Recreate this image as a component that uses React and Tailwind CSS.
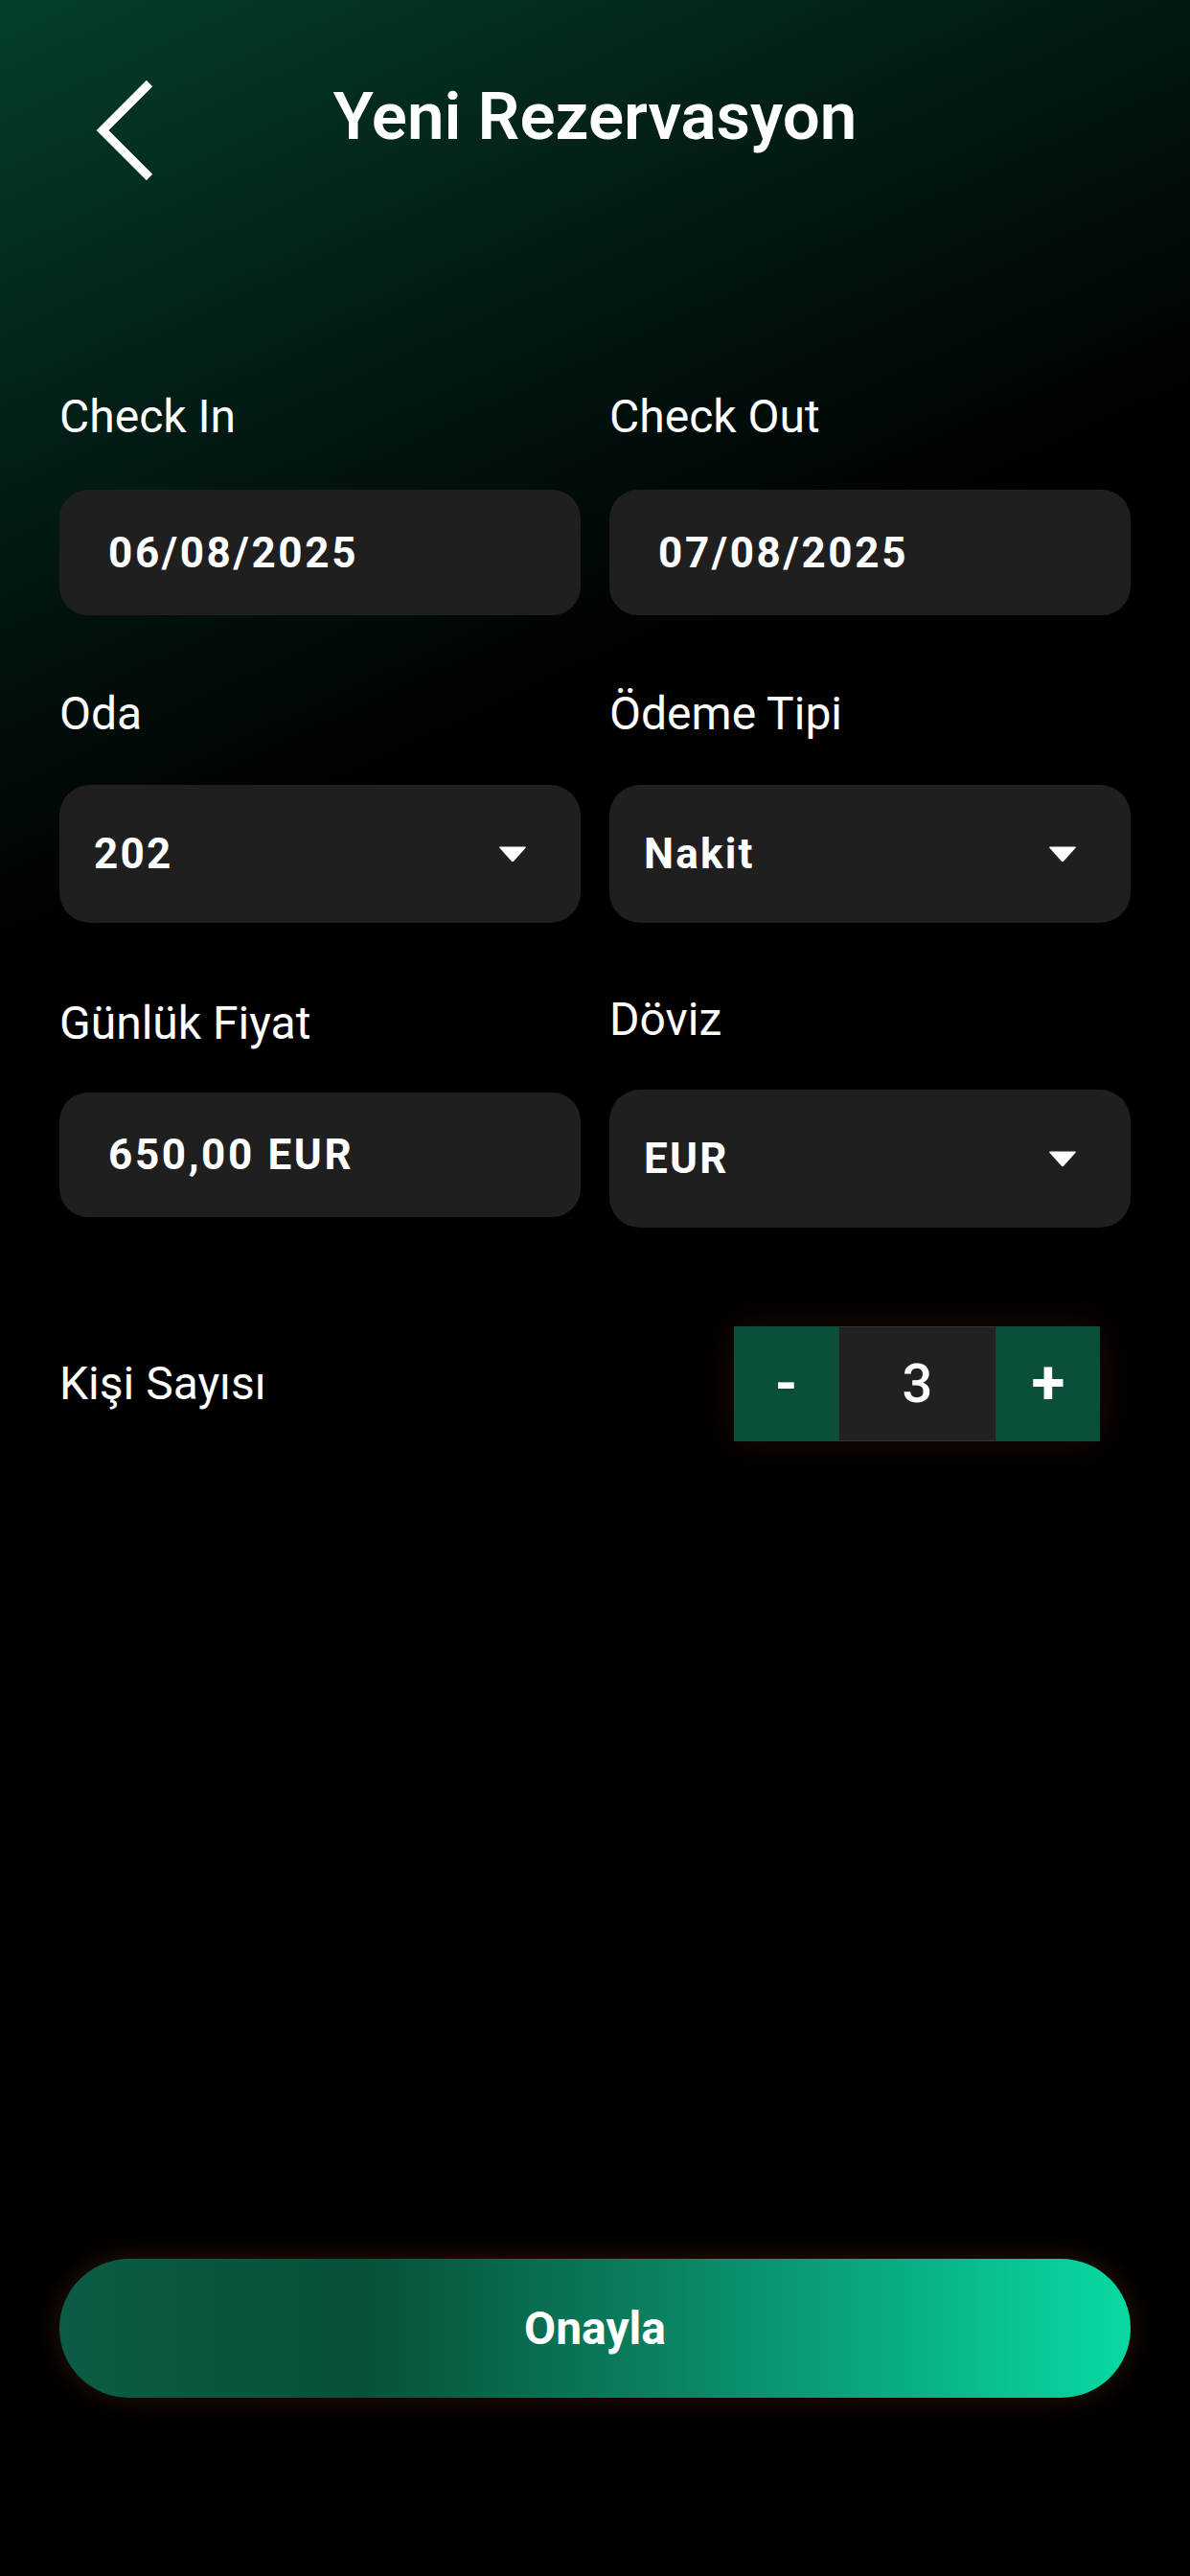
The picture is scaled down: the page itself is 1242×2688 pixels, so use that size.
import React from "react";

const font = { fontFamily: "Roboto, 'Noto Sans', 'Liberation Sans', sans-serif" };

function Caret() {
  return (
    <svg width="30" height="18" viewBox="0 0 30 18" className="shrink-0">
      <path d="M2 1.5 H28 Q29.5 1.5 28.6 2.8 L16.3 16.6 Q15 18 13.7 16.6 L1.4 2.8 Q0.5 1.5 2 1.5 Z" fill="#ffffff" />
    </svg>
  );
}

function Label({ children }) {
  return <div className="text-[48px] leading-[56px] font-normal text-white">{children}</div>;
}

function InputBox({ value, h = "h-[131px]", mt = "mt-[48px]" }) {
  return (
    <div className={`${mt} ${h} rounded-[30px] bg-[#1f1f1f] flex items-center pl-[51px]`}>
      <span className="text-[44px] font-bold tracking-[0.06em] text-white">{value}</span>
    </div>
  );
}

function SelectBox({ value, h = "h-[144px]", mt = "mt-[46px]" }) {
  return (
    <div className={`${mt} ${h} rounded-[32px] bg-[#1f1f1f] flex items-center justify-between pl-[36px] pr-[56px]`}>
      <span className="text-[44px] font-bold tracking-[0.05em] text-white">{value}</span>
      <Caret />
    </div>
  );
}

export default function App() {
  return (
    <div
      style={font}
      className="w-[1242px] h-[2688px] flex flex-col text-white bg-[linear-gradient(155deg,#043f2c_0%,#03291d_10%,#021611_19%,#000000_31%)]"
    >
      {/* Header */}
      <div className="h-[210px] grid grid-cols-[1fr_auto_1fr] items-start pt-[80px]">
        <div className="pl-[100px] pt-[4px]">
          <svg width="62" height="104" viewBox="0 0 62 104">
            <path d="M56 3 L7 52 L56 101" fill="none" stroke="#ffffff" strokeWidth="9" strokeLinejoin="miter" />
          </svg>
        </div>
        <h1 className="text-[69px] leading-[84px] font-semibold text-white">Yeni Rezervasyon</h1>
        <div />
      </div>

      {/* Form */}
      <div className="px-[62px] mt-[197px]">
        {/* Row 1 */}
        <div className="grid grid-cols-2 gap-x-[30px] items-start">
          <div className="flex flex-col">
            <Label>Check In</Label>
            <InputBox value="06/08/2025" />
          </div>
          <div className="flex flex-col">
            <Label>Check Out</Label>
            <InputBox value="07/08/2025" />
          </div>
        </div>

        {/* Row 2 */}
        <div className="grid grid-cols-2 gap-x-[30px] items-start mt-[75px]">
          <div className="flex flex-col">
            <Label>Oda</Label>
            <SelectBox value="202" />
          </div>
          <div className="flex flex-col">
            <Label>Ödeme Tipi</Label>
            <SelectBox value="Nakit" />
          </div>
        </div>

        {/* Row 3 */}
        <div className="grid grid-cols-2 gap-x-[30px] items-start mt-[77px]">
          <div className="flex flex-col">
            <Label>Günlük Fiyat</Label>
            <InputBox value="650,00 EUR" mt="mt-[44px]" h="h-[130px]" />
          </div>
          <div className="flex flex-col -mt-[4px]">
            <Label>Döviz</Label>
            <SelectBox value="EUR" mt="mt-[45px]" />
          </div>
        </div>

        {/* Kişi Sayısı */}
        <div className="mt-[103px] flex items-center justify-between pr-[32px]">
          <span className="text-[48px] leading-[56px] font-normal text-white">Kişi Sayısı</span>
          <div className="flex h-[120px] shadow-[0_0_40px_rgba(70,25,10,0.45)]">
            <div className="w-[109px] bg-[#0a4f3b] flex items-center justify-center text-[60px] font-bold text-white">-</div>
            <div className="w-[165px] bg-[#222121] border border-[#2c3a34] flex items-center justify-center text-[56px] font-medium text-white">3</div>
            <div className="w-[108px] bg-[#0a4f3b] flex items-center justify-center text-[64px] font-bold text-white">+</div>
          </div>
        </div>
      </div>

      {/* Button */}
      <div className="mt-auto mb-[186px] px-[62px]">
        <button className="w-full h-[145px] rounded-full flex items-center justify-center text-[48px] font-bold text-white bg-[linear-gradient(90deg,#0b5c46_0%,#075039_28%,#0a8564_58%,#08d9a3_100%)] shadow-[0_0_30px_rgba(80,35,15,0.55)]">
          Onayla
        </button>
      </div>
    </div>
  );
}
